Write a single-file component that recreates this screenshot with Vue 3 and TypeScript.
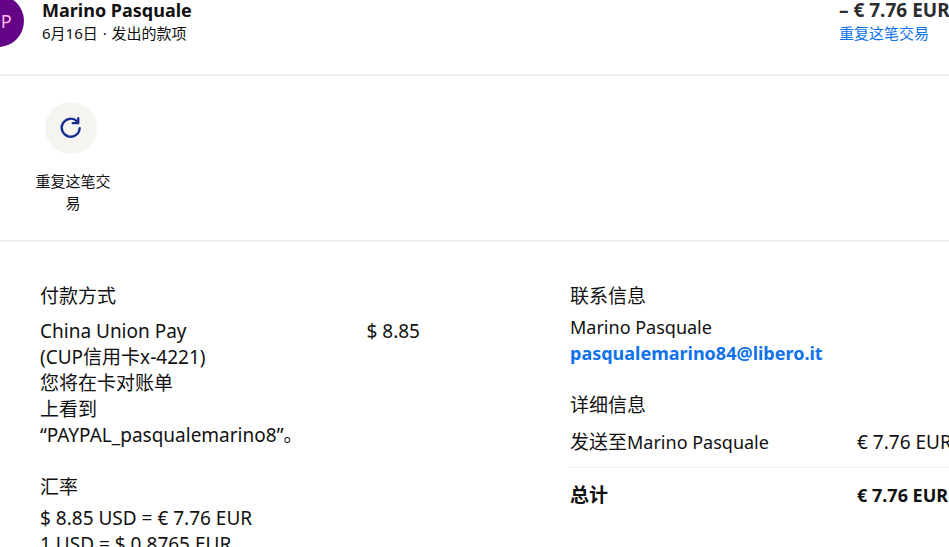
<script setup lang="ts">
interface Run {
  text: string
  han?: boolean
}

const payee = 'Marino Pasquale'
const methodLines: Run[][] = [
  [{ text: 'China Union Pay' }],
  [{ text: '(CUP' }, { text: '信用卡', han: true }, { text: 'x-4221)' }],
  [{ text: '您将在卡对账单', han: true }],
  [{ text: '上看到', han: true }],
  [{ text: '“PAYPAL_pasqualemarino8”' }, { text: '。', han: true }],
]
const rateLines: string[] = ['$ 8.85 USD = € 7.76 EUR', '1 USD = $ 0.8765 EUR']
</script>

<template>
  <main class="page">
    <header class="summary">
      <div class="avatar">MP</div>
      <div class="who">
        <h1 class="strong">{{ payee }}</h1>
        <p class="small">6月16日 <span class="dot">·</span> 发出的款项</p>
      </div>
      <div class="total">
        <p class="strong amount">– € 7.76 EUR</p>
        <a class="small link" href="#repeat">重复这笔交易</a>
      </div>
    </header>

    <section class="actions">
      <button type="button" class="action">
        <span class="disc">
          <svg viewBox="0 0 24 24" width="26" height="26" fill="none" stroke="#142c8e" stroke-width="2.1">
            <path d="M17.6 5.9A8.3 8.3 0 1 0 20 12.2" stroke-linecap="round" />
            <path d="M18.7 3V7.6H13.6" stroke-linecap="round" stroke-linejoin="round" />
          </svg>
        </span>
        <span class="small caption">重复这笔交易</span>
      </button>
    </section>

    <div class="details">
      <div class="column payment">
        <section class="block">
          <h2 class="han">付款方式</h2>
          <div class="method">
            <div class="lines">
              <p v-for="(line, i) in methodLines" :key="i">
                <span v-for="run in line" :key="run.text" :class="{ han: run.han }">{{ run.text }}</span>
              </p>
            </div>
            <p class="charge">$ 8.85</p>
          </div>
        </section>
        <section class="block">
          <h2 class="han">汇率</h2>
          <p v-for="line in rateLines" :key="line">{{ line }}</p>
        </section>
      </div>

      <div class="column">
        <section class="block contact">
          <h2 class="han">联系信息</h2>
          <p>{{ payee }}</p>
          <a class="strong link" href="mailto:pasqualemarino84@libero.it">pasqualemarino84@libero.it</a>
        </section>
        <section class="block">
          <h2 class="han">详细信息</h2>
          <table>
            <tbody>
              <tr>
                <th scope="row"><span class="han">发送至</span>{{ payee }}</th>
                <td>€ 7.76 EUR</td>
              </tr>
              <tr class="strong">
                <th scope="row"><span class="han">总计</span></th>
                <td>€ 7.76 EUR</td>
              </tr>
            </tbody>
          </table>
        </section>
      </div>
    </div>
  </main>
</template>

<style>
body {
  overflow: hidden;
  background: #fff;
}
</style>

<style scoped>
.page {
  margin: -5px -16px 0 -28px;
  font-family: "Noto Sans", "Noto Sans CJK SC", sans-serif;
  font-size: 18px;
  line-height: 26px;
  color: #111;
}
h1,
h2,
p {
  margin: 0;
  font-size: inherit;
  font-weight: 400;
}
.strong,
.strong th {
  font-weight: 700;
}
.han {
  font-family: "Noto Sans CJK SC", sans-serif;
  font-size: 19px;
  line-height: 24px;
}
.small {
  font-size: 15px;
  line-height: 22px;
}
.link {
  color: #1072eb;
  text-decoration: none;
}
.summary {
  display: flex;
  gap: 18px;
  height: 79px;
  padding-right: 16px;
  border-bottom: 2px solid #efefec;
  line-height: 24px;
}
.avatar {
  display: flex;
  align-items: center;
  justify-content: center;
  width: 52px;
  height: 52px;
  border-radius: 50%;
  background: #640487;
  color: #ffb8f0;
  font-size: 18px;
}
.who {
  flex: 1;
  padding-top: 3px;
}
.dot {
  margin: 0 1px;
}
.total {
  width: 110px;
  padding-top: 3px;
  white-space: nowrap;
}
.amount {
  font-size: 19px;
  color: #2c2e2f;
}
.total .link {
  display: block;
}
.actions {
  padding: 26px 59px 26px;
  border-bottom: 2px solid #f1f1ef;
}
.action {
  display: flex;
  flex-direction: column;
  align-items: center;
  gap: 16px;
  width: 80px;
  padding: 0;
  border: 0;
  background: none;
  font-family: inherit;
  color: inherit;
}
.caption {
  padding-left: 4px;
}
.disc {
  display: flex;
  align-items: center;
  justify-content: center;
  width: 52px;
  height: 52px;
  border-radius: 50%;
  background: #f5f4f0;
}
.details {
  display: grid;
  grid-template-columns: 1fr 395px;
  gap: 150px;
  padding-top: 41px;
  padding-left: 68px;
}
.payment {
  font-size: 19px;
}
.block + .block {
  margin-top: 26px;
}
h2 {
  margin-bottom: 11px;
}
.block + .block h2,
.contact h2 {
  margin-bottom: 7px;
}
.method {
  display: flex;
  justify-content: space-between;
}
.lines {
  white-space: nowrap;
}
table {
  width: 100%;
  border-collapse: collapse;
}
th,
td {
  padding: 6px 0 12px;
  text-align: left;
  font-weight: 400;
}
td {
  width: 108px;
  font-size: 19px;
  white-space: nowrap;
}
tr + tr th,
tr + tr td {
  padding-top: 14px;
  border-top: 1px solid #efefec;
}
.strong td {
  font-size: 18px;
  font-weight: 700;
}
</style>
